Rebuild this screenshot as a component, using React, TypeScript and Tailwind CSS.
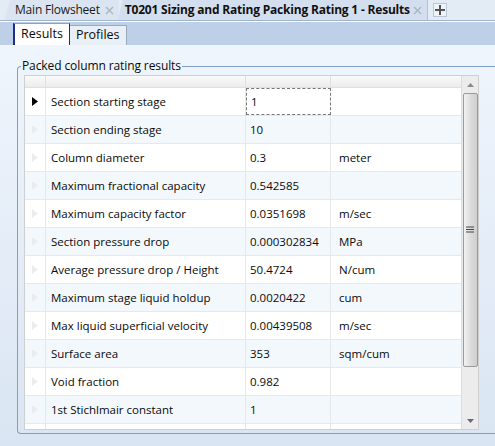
import React from 'react';

type Row = { name: string; value: string; unit: string };

const rows: Row[] = [
  { name: 'Section starting stage', value: '1', unit: '' },
  { name: 'Section ending stage', value: '10', unit: '' },
  { name: 'Column diameter', value: '0.3', unit: 'meter' },
  { name: 'Maximum fractional capacity', value: '0.542585', unit: '' },
  { name: 'Maximum capacity factor', value: '0.0351698', unit: 'm/sec' },
  { name: 'Section pressure drop', value: '0.000302834', unit: 'MPa' },
  { name: 'Average pressure drop / Height', value: '50.4724', unit: 'N/cum' },
  { name: 'Maximum stage liquid holdup', value: '0.0020422', unit: 'cum' },
  { name: 'Max liquid superficial velocity', value: '0.00439508', unit: 'm/sec' },
  { name: 'Surface area', value: '353', unit: 'sqm/cum' },
  { name: 'Void fraction', value: '0.982', unit: '' },
  { name: '1st Stichlmair constant', value: '1', unit: '' },
  // partly scrolled into view, text below the fold
  { name: '', value: '', unit: '' },
];

function Close() {
  return (
    <svg width="9" height="9" viewBox="0 0 9 9" className="shrink-0">
      <path d="M1 1L8 8M8 1L1 8" stroke="#a9b4c2" strokeWidth="1.3" />
    </svg>
  );
}

function Triangle({ active }: { active: boolean }) {
  return (
    <svg width="6" height="9" viewBox="0 0 6 9">
      <path d="M0 0L6 4.5L0 9Z" fill={active ? '#000' : '#ececec'} />
    </svg>
  );
}

export default function App() {
  return (
    <div
      className="w-[495px] h-[446px] overflow-hidden bg-[#dce6f3] text-[11.5px] text-[#0a0a0a] flex flex-col"
      style={{ fontFamily: '"Open Sans", "Noto Sans", sans-serif' }}
    >
      {/* document tabs */}
      <div className="h-[21px] shrink-0 flex items-end bg-[#e3ebf5] border-b border-[#9fb3cc] whitespace-nowrap">
        <div className="h-[20px] shrink-0 ml-[4px] pl-[11px] pr-[5px] flex items-center gap-[5px] bg-[#dbe5f2] text-[12px] tracking-[-0.2px] text-[#1a1a1a] [clip-path:polygon(6px_0,100%_0,100%_100%,0_100%)]">
          Main Flowsheet
          <Close />
        </div>
        <div className="h-[20px] shrink-0 pl-[7px] pr-[5px] flex items-center gap-[3px] bg-[#d3dfee] font-bold text-[12px] tracking-[-0.2px] text-[#111] border-r border-[#a8bbd3] [clip-path:polygon(5px_0,100%_0,100%_100%,0_100%)] -ml-[1px]">
          T0201 Sizing and Rating Packing Rating 1 - Results
          <Close />
        </div>
        <div className="shrink-0 ml-[5px] mb-[3px] w-[14px] h-[14px] border border-[#b9c7d8] bg-[#eef3f9] flex items-center justify-center">
          <svg width="10" height="10" viewBox="0 0 10 10">
            <path d="M5 0V10M0 5H10" stroke="#555" strokeWidth="2" />
          </svg>
        </div>
      </div>

      {/* sub tabs */}
      <div className="h-[24px] shrink-0 bg-[#bdd0e7] border-t border-white flex items-end pl-[13px]">
        <div className="h-[22px] px-[6px] bg-white border-l-2 border-r border-t border-l-[#1d2d8c] border-r-[#1d2d8c] border-t-[#8aa2c8] flex items-center text-[12.5px]">
          Results
        </div>
        <div className="h-[20px] px-[6px] bg-[#e9eff7] border-r border-t border-[#9aa9bd] flex items-center text-[12.5px]">
          Profiles
        </div>
      </div>

      {/* panel */}
      <div className="flex-1 bg-gradient-to-b from-[#eff5fc] to-[#dae5f3] pt-[21px] pl-[17px]">
        <div className="relative h-[368px] border-l border-t border-b border-[#7ba1c8] rounded-tl-[4px] rounded-bl-[4px]">
          <div className="absolute -top-[9px] left-[3px] px-[1px] bg-[#eef4fb] leading-[16px] text-[12px] tracking-[-0.1px]">
            Packed column rating results
          </div>
          <div className="absolute left-[6px] top-[8px] w-[455px] h-[355px] bg-white border border-[#cfcfcf] flex overflow-hidden">
            <div className="flex-1 flex flex-col">
              <div className="h-[12px] flex shrink-0 bg-gradient-to-b from-[#fafafa] to-[#ececec] border-b border-[#e0e0e0]">
                <div className="w-[21px] border-r border-[#e0e0e0]" />
                <div className="w-[200px] border-r border-[#e0e0e0]" />
                <div className="w-[85px] border-r border-[#e0e0e0]" />
                <div className="flex-1" />
              </div>
              {rows.map((r, i) => (
                <div
                  key={i}
                  className={`h-[28px] shrink-0 flex border-b border-[#e8e8e8] ${i % 2 === 1 ? 'bg-[#f3f8fd]' : 'bg-white'}`}
                >
                  <div className="w-[21px] border-r border-[#e8e8e8] flex items-center justify-center">
                    <Triangle active={i === 0} />
                  </div>
                  <div className="w-[200px] border-r border-[#e8e8e8] flex items-center pl-[5px] whitespace-nowrap">
                    {r.name}
                  </div>
                  <div
                    className={`w-[85px] flex items-center pl-[4px] whitespace-nowrap ${i === 0 ? 'border border-dashed border-[#777]' : 'border-r border-[#e8e8e8]'}`}
                  >
                    {r.value}
                  </div>
                  <div className="flex-1 flex items-center pl-[8px] whitespace-nowrap">{r.unit}</div>
                </div>
              ))}
            </div>
            {/* scrollbar */}
            <div className="w-[17px] shrink-0 bg-[#ececec] border-l border-[#dcdcdc] flex flex-col items-center">
              <div className="h-[17px] flex items-center justify-center">
                <svg width="7" height="4" viewBox="0 0 7 4">
                  <path d="M0 4L3.5 0L7 4Z" fill="#8a8a8a" />
                </svg>
              </div>
              <div className="w-[15px] h-[274px] rounded-[2px] border border-[#9a9a9a] bg-gradient-to-r from-[#f2f2f2] via-[#dcdcdc] to-[#cfcfcf] flex items-center justify-center">
                <svg width="8" height="8" viewBox="0 0 8 8">
                  <path d="M0 1H8M0 3.5H8M0 6H8" stroke="#444" strokeWidth="1.2" />
                </svg>
              </div>
              <div className="flex-1" />
              <div className="h-[17px] flex items-center justify-center">
                <svg width="7" height="4" viewBox="0 0 7 4">
                  <path d="M0 0L3.5 4L7 0Z" fill="#6b6b6b" />
                </svg>
              </div>
            </div>
          </div>
        </div>
      </div>
    </div>
  );
}
